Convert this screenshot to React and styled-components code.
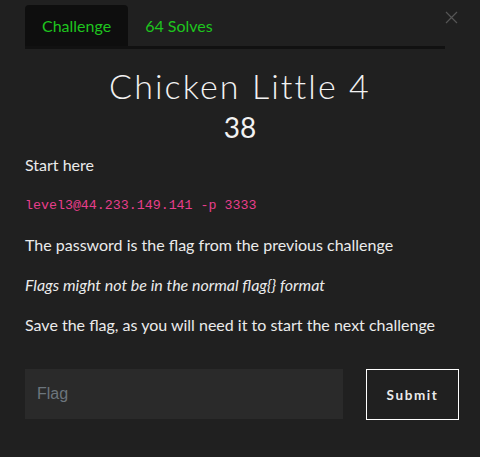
import styled, { createGlobalStyle } from "styled-components";

const GlobalStyle = createGlobalStyle`
  html, body {
    margin: 0;
    padding: 0;
    background-color: #202020;
  }
  body {
    font-family: "Lato", "Liberation Sans", sans-serif;
    color: #ebebeb;
  }
`;

const Modal = styled.div`
  width: 480px;
  height: 457px;
  box-sizing: border-box;
  padding: 5px 35px 0 25px;
  background-color: #202020;
  position: relative;
`;

const Close = styled.button`
  position: absolute;
  top: 11px;
  right: 22px;
  width: 13px;
  height: 13px;
  padding: 0;
  border: none;
  background: transparent;
  cursor: pointer;
`;

const Tabs = styled.nav`
  display: flex;
  border-bottom: 3px solid #111111;
`;

const Tab = styled.div`
  height: 41px;
  box-sizing: border-box;
  padding: 0 17px;
  display: flex;
  align-items: center;
  font-size: 16px;
  color: #1ec51e;
  background-color: ${(p) => (p.$active ? "#0e0e0e" : "transparent")};
  border-radius: 4px 4px 0 0;
`;

// heading block spans the full modal width so it centres on the window
const Heading = styled.header`
  margin: 17px -35px 0 -25px;
  text-align: center;
  color: #f2f2f2;
`;

const Title = styled.h2`
  margin: 0;
  font-family: "Lato", sans-serif;
  font-weight: 300;
  font-size: 34px;
  letter-spacing: 2.1px;
  line-height: 40px;
`;

const Value = styled.h3`
  margin: 4px 0 0;
  font-weight: 400;
  font-size: 28px;
  line-height: 34px;
`;

const Body = styled.div`
  margin-top: 9px;
  font-size: 16px;
  line-height: 24px;
`;

const Para = styled.p`
  margin: 0 0 ${(p) => p.$gap || 16}px;
`;

const Code = styled.code`
  font-family: "Liberation Mono", "DejaVu Sans Mono", monospace;
  font-size: 13.3px;
  color: #e83e8c;
`;

const FlagRow = styled.form`
  display: flex;
  gap: 23px;
  margin-top: 32px;
`;

const Input = styled.input`
  flex-shrink: 0;
  width: 318px;
  height: 50px;
  box-sizing: border-box;
  border: none;
  outline: none;
  padding: 0 12px;
  background-color: #2a2a2a;
  color: #eee;
  font-family: "Liberation Sans", Arial, sans-serif;
  font-size: 16px;

  &::placeholder {
    color: #6c757d;
  }
`;

const Submit = styled.button`
  flex-shrink: 0;
  width: 93px;
  height: 51px;
  box-sizing: border-box;
  border: 1px solid #ffffff;
  background: transparent;
  color: #eaeaea;
  font-family: "Lato", sans-serif;
  font-weight: 700;
  font-size: 13.5px;
  letter-spacing: 1.6px;
  cursor: pointer;
`;

export default function App() {
  return (
    <>
      <GlobalStyle />
      <Modal>
        <Close aria-label="Close">
          <svg width="13" height="13" viewBox="0 0 13 13">
            <path d="M1 1 L12 12 M12 1 L1 12" stroke="#555555" strokeWidth="1.2" />
          </svg>
        </Close>
        <Tabs>
          <Tab $active>Challenge</Tab>
          <Tab>64 Solves</Tab>
        </Tabs>
        <Heading>
          <Title>Chicken Little 4</Title>
          <Value>38</Value>
        </Heading>
        <Body>
          <Para $gap={14}>Start here</Para>
          <Para $gap={15}>
            <Code>level3@44.233.149.141 -p 3333</Code>
          </Para>
          <Para>The password is the flag from the previous challenge</Para>
          <Para>
            <em>Flags might not be in the normal flag{"{}"} format</em>
          </Para>
          <Para>Save the flag, as you will need it to start the next challenge</Para>
        </Body>
        <FlagRow onSubmit={(e) => e.preventDefault()}>
          <Input type="text" placeholder="Flag" />
          <Submit type="submit">Submit</Submit>
        </FlagRow>
      </Modal>
    </>
  );
}
